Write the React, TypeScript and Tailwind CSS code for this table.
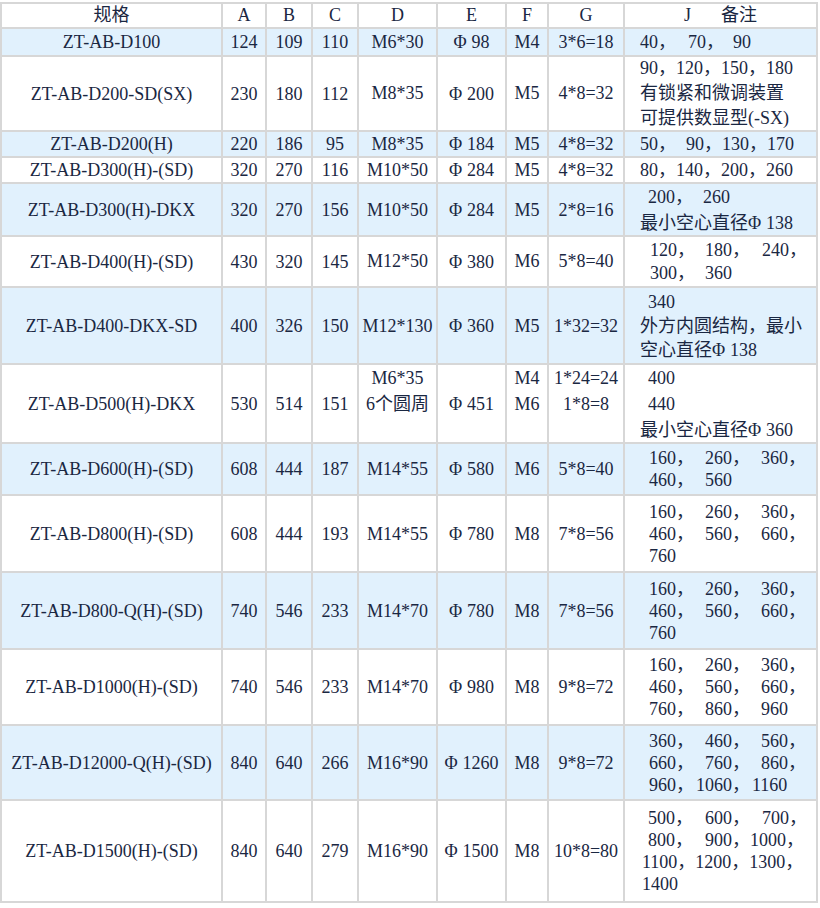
import React from 'react'

type Tok = string | number
type Row = {
  spec: string
  a: string
  b: string
  c: string
  d: string[]
  e: string
  f: string[]
  g: string[]
  j: Tok[][]
  h: string
  lh: string
  blue?: boolean
}

// gap widths used inside the J column lines
const GAP: Record<number, string> = {
  2: 'w-[2px]',
  8: 'w-[8px]',
  9: 'w-[9px]',
  10: 'w-[10px]',
  11: 'w-[11px]',
  12: 'w-[12px]',
}

const COLS = [
  'w-[221px]',
  'w-[44px]',
  'w-[46px]',
  'w-[46px]',
  'w-[79px]',
  'w-[69px]',
  'w-[42px]',
  'w-[76px]',
]

const L160: Tok[][] = [
  [9, '160，', 11, '260，', 11, '360，'],
  [9, '460，', 11, '560，', 11, '660，'],
  [9, '760'],
]

const ROWS: Row[] = [
  { spec: 'ZT-AB-D100', a: '124', b: '109', c: '110', d: ['M6*30'], e: 'Φ98', f: ['M4'], g: ['3*6=18'], j: [['40，', 12, '70，', 9, '90']], h: 'h-[28px]', lh: 'leading-[24px]', blue: true },
  { spec: 'ZT-AB-D200-SD(SX)', a: '230', b: '180', c: '112', d: ['M8*35'], e: 'Φ200', f: ['M5'], g: ['4*8=32'], j: [['90，120，150，180'], ['有锁紧和微调装置'], ['可提供数显型(-SX)']], h: 'h-[75px]', lh: 'leading-[25px]' },
  { spec: 'ZT-AB-D200(H)', a: '220', b: '186', c: '95', d: ['M8*35'], e: 'Φ184', f: ['M5'], g: ['4*8=32'], j: [['50，', 10, '90，130，170']], h: 'h-[26px]', lh: 'leading-[24px]', blue: true },
  { spec: 'ZT-AB-D300(H)-(SD)', a: '320', b: '270', c: '116', d: ['M10*50'], e: 'Φ284', f: ['M5'], g: ['4*8=32'], j: [['80，140，200，260']], h: 'h-[26px]', lh: 'leading-[24px]' },
  { spec: 'ZT-AB-D300(H)-DKX', a: '320', b: '270', c: '156', d: ['M10*50'], e: 'Φ284', f: ['M5'], g: ['2*8=16'], j: [[8, '200，', 10, '260'], ['最小空心直径Φ138']], h: 'h-[53px]', lh: 'leading-[26px]', blue: true },
  { spec: 'ZT-AB-D400(H)-(SD)', a: '430', b: '320', c: '145', d: ['M12*50'], e: 'Φ380', f: ['M6'], g: ['5*8=40'], j: [[10, '120，', 10, '180，', 12, '240，'], [10, '300，', 10, '360']], h: 'h-[51px]', lh: 'leading-[23px]' },
  { spec: 'ZT-AB-D400-DKX-SD', a: '400', b: '326', c: '150', d: ['M12*130'], e: 'Φ360', f: ['M5'], g: ['1*32=32'], j: [[8, '340'], ['外方内圆结构，最小'], ['空心直径Φ138']], h: 'h-[77px]', lh: 'leading-[24px]', blue: true },
  { spec: 'ZT-AB-D500(H)-DKX', a: '530', b: '514', c: '151', d: ['M6*35', '6个圆周', '\u00a0'], e: 'Φ451', f: ['M4', 'M6', '\u00a0'], g: ['1*24=24', '1*8=8', '\u00a0'], j: [[8, '400'], [8, '440'], ['最小空心直径Φ360']], h: 'h-[79px]', lh: 'leading-[26px]' },
  { spec: 'ZT-AB-D600(H)-(SD)', a: '608', b: '444', c: '187', d: ['M14*55'], e: 'Φ580', f: ['M6'], g: ['5*8=40'], j: [[9, '160，', 11, '260，', 11, '360，'], [9, '460，', 11, '560']], h: 'h-[52px]', lh: 'leading-[22px]', blue: true },
  { spec: 'ZT-AB-D800(H)-(SD)', a: '608', b: '444', c: '193', d: ['M14*55'], e: 'Φ780', f: ['M8'], g: ['7*8=56'], j: L160, h: 'h-[77px]', lh: 'leading-[22px]' },
  { spec: 'ZT-AB-D800-Q(H)-(SD)', a: '740', b: '546', c: '233', d: ['M14*70'], e: 'Φ780', f: ['M8'], g: ['7*8=56'], j: L160, h: 'h-[77px]', lh: 'leading-[22px]', blue: true },
  { spec: 'ZT-AB-D1000(H)-(SD)', a: '740', b: '546', c: '233', d: ['M14*70'], e: 'Φ980', f: ['M8'], g: ['9*8=72'], j: [[9, '160，', 11, '260，', 11, '360，'], [9, '460，', 11, '560，', 11, '660，'], [9, '760，', 11, '860，', 11, '960']], h: 'h-[76px]', lh: 'leading-[22px]' },
  { spec: 'ZT-AB-D12000-Q(H)-(SD)', a: '840', b: '640', c: '266', d: ['M16*90'], e: 'Φ1260', f: ['M8'], g: ['9*8=72'], j: [[9, '360，', 11, '460，', 11, '560，'], [9, '660，', 11, '760，', 11, '860，'], [9, '960，', 2, '1060，', 2, '1160']], h: 'h-[75px]', lh: 'leading-[22px]', blue: true },
  { spec: 'ZT-AB-D1500(H)-(SD)', a: '840', b: '640', c: '279', d: ['M16*90'], e: 'Φ1500', f: ['M8'], g: ['10*8=80'], j: [[8, '500，', 12, '600，', 12, '700，'], [8, '800，', 12, '900，', '1000，'], [2, '1100，1200，1300，'], [2, '1400']], h: 'h-[100px]', lh: 'leading-[22px]' },
]

// Φ is full width in the source font, so give it its own box
function Phi({ text }: { text: string }) {
  const parts = text.split('Φ')
  return (
    <>
      {parts.map((p, i) => (
        <React.Fragment key={i}>
          {i > 0 && <span className="inline-block w-[18px] text-left">Φ</span>}
          {p}
        </React.Fragment>
      ))}
    </>
  )
}

function Cell({ w, last, children }: { w: string; last?: boolean; children: React.ReactNode }) {
  return (
    <div
      className={`${w} shrink-0 flex flex-col items-center justify-center text-center ${
        last ? '' : 'border-r-2 border-[#d7d7d7]'
      }`}
    >
      {children}
    </div>
  )
}

function Lines({ items, lh }: { items: string[]; lh: string }) {
  return (
    <>
      {items.map((t, i) => (
        <div key={i} className={`${lh} whitespace-nowrap`}>
          {t}
        </div>
      ))}
    </>
  )
}

function JLine({ toks, lh }: { toks: Tok[]; lh: string }) {
  return (
    <div className={`${lh} flex whitespace-nowrap`}>
      {toks.map((t, i) =>
        typeof t === 'number' ? (
          <span key={i} className={`inline-block shrink-0 ${GAP[t]}`} />
        ) : (
          <span key={i}>
            <Phi text={t} />
          </span>
        )
      )}
    </div>
  )
}

export default function App() {
  return (
    <div
      className="min-h-screen bg-white pt-[2px] text-[18px] text-[#1a2742]"
      style={{ fontFamily: '"Liberation Serif", "Noto Sans CJK SC", serif' }}
    >
      <div className="w-[818px] border-2 border-[#d7d7d7] bg-white">
        {/* header */}
        <div className="flex h-[25px] border-b-2 border-[#d7d7d7] leading-[23px]">
          <Cell w={COLS[0]}>规格</Cell>
          <Cell w={COLS[1]}>A</Cell>
          <Cell w={COLS[2]}>B</Cell>
          <Cell w={COLS[3]}>C</Cell>
          <Cell w={COLS[4]}>D</Cell>
          <Cell w={COLS[5]}>E</Cell>
          <Cell w={COLS[6]}>F</Cell>
          <Cell w={COLS[7]}>G</Cell>
          <div className="flex-1 flex items-center justify-center">
            <span>J</span>
            <span className="inline-block w-[30px]" />
            <span>备注</span>
          </div>
        </div>

        {ROWS.map((r, i) => (
          <div
            key={r.spec}
            className={`flex ${r.h} ${i < ROWS.length - 1 ? 'border-b-2 border-[#d7d7d7]' : ''} ${
              r.blue ? 'bg-[#e1f1fd]' : 'bg-white'
            }`}
          >
            <Cell w={COLS[0]}>
              <div className="leading-[24px] whitespace-nowrap">{r.spec}</div>
            </Cell>
            <Cell w={COLS[1]}>
              <div className="leading-[24px]">{r.a}</div>
            </Cell>
            <Cell w={COLS[2]}>
              <div className="leading-[24px]">{r.b}</div>
            </Cell>
            <Cell w={COLS[3]}>
              <div className="leading-[24px]">{r.c}</div>
            </Cell>
            <Cell w={COLS[4]}>
              <Lines items={r.d} lh={r.lh} />
            </Cell>
            <Cell w={COLS[5]}>
              <div className="leading-[24px] whitespace-nowrap">
                <Phi text={r.e} />
              </div>
            </Cell>
            <Cell w={COLS[6]}>
              <Lines items={r.f} lh={r.lh} />
            </Cell>
            <Cell w={COLS[7]}>
              <Lines items={r.g} lh={r.lh} />
            </Cell>
            <div className="flex-1 flex flex-col justify-center pl-[15px]">
              {r.j.map((toks, k) => (
                <JLine key={k} toks={toks} lh={r.lh} />
              ))}
            </div>
          </div>
        ))}
      </div>
    </div>
  )
}
